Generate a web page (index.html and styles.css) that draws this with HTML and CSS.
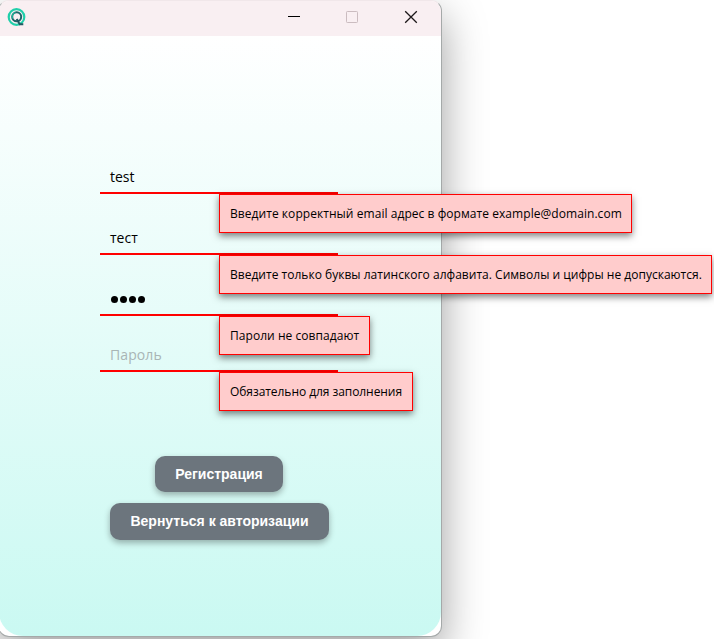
FILE: index.html
```html
<!DOCTYPE html>
<html lang="ru">
<head>
<meta charset="utf-8">
<title>Регистрация</title>
<link rel="stylesheet" href="styles.css">
</head>
<body>
<main class="window">
  <header class="titlebar">
    <svg class="logo" width="20" height="20" viewBox="0 0 20 20" fill="none">
      <circle cx="9.5" cy="9" r="7.8" stroke="#20cfaa" stroke-width="2.2"/>
      <circle cx="9.7" cy="8.8" r="4.5" stroke="#1f6469" stroke-width="2"/>
      <path d="M5.5 10.5a4.6 4.6 0 0 1 3-6" stroke="#1db99c" stroke-width="1.2"/>
      <path d="M9.7 11l3 5.2h3.6" stroke="#1f5a62" stroke-width="1.9"/>
    </svg>
    <div class="controls">
      <svg width="14" height="14" viewBox="0 0 14 14"><path d="M1 6.5h12" stroke="#000"/></svg>
      <svg width="14" height="14" viewBox="0 0 14 14"><rect x="1.5" y="1.5" width="11" height="11" rx=".8" fill="none" stroke="#cbbcc0"/></svg>
      <svg width="14" height="14" viewBox="0 0 14 14"><path d="M1.2 1.2l11.6 11.6M12.8 1.2L1.2 12.8" stroke="#1c1719" stroke-width="1.3"/></svg>
    </div>
  </header>
  <form class="content">
    <div class="field"><span class="value">test</span><div class="tip tip-email">Введите корректный email адрес в формате example@domain.com</div></div>
    <div class="field"><span class="value">тест</span><div class="tip tip-name">Введите только буквы латинского алфавита. Символы и цифры не допускаются.</div></div>
    <div class="field"><span class="dots"><i></i><i></i><i></i><i></i></span><div class="tip tip-match">Пароли не совпадают</div></div>
    <div class="field short"><span class="value placeholder">Пароль</span><div class="tip tip-required">Обязательно для заполнения</div></div>
    <div class="actions">
      <button type="button" class="register">Регистрация</button>
      <button type="button" class="back">Вернуться к авторизации</button>
    </div>
  </form>
</main>
</body>
</html>
```

FILE: styles.css
```css
* { box-sizing: border-box; }
body { margin: 0; height: 639px; overflow: hidden; background: #fff; font-family: "Open Sans", "Noto Sans", sans-serif; }
.window { width: 444px; height: 637px; margin-left: -2px; border: 1px solid #a5a9a9; border-top-color: #f1e7ea; border-radius: 11px; background: #fff; box-shadow: 0 16px 44px rgba(0,0,0,.38); }
.titlebar { height: 35px; padding: 0 23px 0 8px; border-radius: 10px 10px 0 0; background: #f9eff2; display: flex; align-items: center; justify-content: space-between; }
.logo { display: block; margin-top: -2px; }
.controls { display: flex; gap: 44px; }
.controls svg { display: block; margin: -3px 0 0; }
.controls svg:nth-child(-n+2) { position: relative; left: -1px; }
.content { margin: 0; height: 600px; padding: 123px 0 0 101px; border-radius: 0 0 24px 24px; background: linear-gradient(#fff, #caf9f2); }
.field { position: relative; width: 238px; height: 35px; margin-bottom: 26px; padding-left: 10px; border-bottom: 2px solid #f00; }
.field.short { margin-top: -5px; margin-bottom: 0; }
.value { display: block; font-size: 14px; line-height: 36px; color: #000; }
.placeholder { color: #a9b5b5; letter-spacing: .1px; }
.dots { display: flex; gap: 2.2px; padding: 15px 0 0 .8px; }
.dots i { width: 7px; height: 7px; border-radius: 50%; background: #000; }
.tip { position: absolute; z-index: 2; left: 119px; top: 35px; height: 39px; padding: 0 10px; border: 1px solid #f00; background: #fcc; color: #000; font-size: 12px; line-height: 37px; white-space: nowrap; box-shadow: 0 3px 7px rgba(0,0,0,.5); }
.tip-email { width: 413px; letter-spacing: .055px; }
.tip-name { width: 493px; letter-spacing: .018px; }
.tip-match { width: 151px; letter-spacing: .05px; }
.tip-required { width: 194px; letter-spacing: -.06px; }
.actions { width: 219px; margin: 84px 0 0 10px; display: flex; flex-direction: column; align-items: center; gap: 11px; }
button { height: 36px; padding: 0; border: 0; border-radius: 10px; background: #6c757d; color: #fff; font: bold 14px "Liberation Sans", sans-serif; white-space: nowrap; box-shadow: 0 3px 6px rgba(0,0,0,.3); }
.register { width: 128px; margin-right: 1px; }
.back { width: 219px; height: 37px; padding-bottom: 2px; }
```
